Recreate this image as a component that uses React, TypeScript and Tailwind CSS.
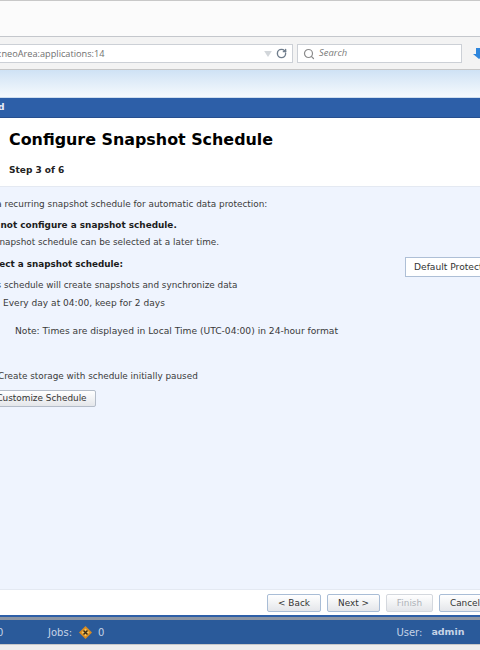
import { Search, RotateCw } from "lucide-react";

const body = { fontFamily: '"DejaVu Sans", Verdana, sans-serif' };

function WizardButton({ label, disabled, className }: { label: string; disabled?: boolean; className: string }) {
  return (
    <button
      className={`h-[18px] shrink-0 rounded-[2px] border text-[8.9px] leading-none bg-gradient-to-b from-white to-[#e4e6ea] ${
        disabled ? "border-[#d4d8de] text-[#aeb2b8]" : "border-[#a9bdd6] text-[#333333]"
      } ${className}`}
    >
      {label}
    </button>
  );
}

export default function App() {
  return (
    <div className="w-[480px] h-[650px] overflow-hidden bg-white flex flex-col" style={body}>
      {/* Browser tab strip */}
      <div className="h-[37px] shrink-0 bg-[#fbfbfb] border-t border-b border-t-[#c8c8c8] border-b-[#c4c7cc]" />

      {/* Browser toolbar */}
      <div className="h-[33px] shrink-0 bg-[#f3f3f3] border-b border-[#c6c6c6] flex items-center pt-[1px]">
        <div
          className="w-[293px] h-[19px] shrink-0 bg-white border border-l-0 border-[#ccd0d6] flex items-center justify-between pr-[5px] text-[9.2px] text-[#6f6f6f]"
          style={{ fontFamily: '"Open Sans", sans-serif' }}
        >
          <span className="-ml-[1px] whitespace-nowrap">:neoArea:applications:14</span>
          <span className="flex items-center gap-[4px]">
            <svg width="8" height="6" viewBox="0 0 9 7"><path d="M0 0h9L4.5 7z" fill="#d2d6da" /></svg>
            <RotateCw size={11} strokeWidth={3} className="text-[#6f7d8c]" />
          </span>
        </div>
        <div
          className="ml-[4px] w-[165px] h-[19px] shrink-0 bg-white border border-[#ccd0d6] flex items-center pl-[5px] gap-[4px] text-[9.4px] italic text-[#7a7a7a]"
          style={{ fontFamily: '"Open Sans", sans-serif' }}
        >
          <Search size={12} strokeWidth={2.4} className="text-[#8a8a8a]" />
          <span>Search</span>
        </div>
        <svg className="ml-[11px] shrink-0" width="10" height="13" viewBox="0 0 10 13">
          <path d="M3 1h7v5h0v3L6 12 0 7h3z" fill="#2f86dc" />
        </svg>
      </div>

      {/* Application header gradient */}
      <div className="h-[28px] shrink-0 bg-gradient-to-b from-[#cfe2f5] to-[#f6fafd] border-b border-[#cfdff0]" />

      {/* Wizard title bar */}
      <div className="h-[20px] shrink-0 bg-[#2d5fa8] border-b border-[#264f8f] flex items-center text-[9.15px] font-bold text-[#e8eef7]">
        <span className="-ml-[2px]">d</span>
      </div>

      {/* Heading */}
      <div className="h-[69px] shrink-0 bg-white border-b border-[#e4e9f2] pl-[9px] pt-[11px]">
        <h1 className="text-[15.9px] leading-[22px] font-bold text-black whitespace-nowrap">Configure Snapshot Schedule</h1>
        <p className="mt-[12px] text-[9px] leading-[14px] font-bold text-[#222222]">Step 3 of 6</p>
      </div>

      {/* Body */}
      <div className="flex-1 min-h-0 bg-[#eff4fe] text-[8.85px] leading-[14px] text-[#3a3a3a] whitespace-nowrap flex flex-col pt-[10px]">
        <p className="-ml-[34px] text-[8.9px]">Select a recurring snapshot schedule for automatic data protection:</p>
        <p className="-ml-[16px] mt-[7px] text-[8.9px] font-bold text-[#1c1c1c]">Do not configure a snapshot schedule.</p>
        <p className="-ml-[14px] mt-[3px]">A snapshot schedule can be selected at a later time.</p>
        <div className="mt-[8px] flex items-start justify-between">
          <p className="-ml-[16px] text-[8.8px] font-bold text-[#1c1c1c]">Select a snapshot schedule:</p>
          <div className="w-[75px] h-[20px] overflow-hidden shrink-0 bg-white border border-r-0 border-[#aebfd6] pl-[8px] text-[9.15px] leading-[18px] text-[#333333]">
            Default Protection Schedule
          </div>
        </div>
        <p className="-ml-[17px] mt-[1px]">This schedule will create snapshots and synchronize data</p>
        <p className="ml-[3px] mt-[4px] text-[9.05px]">Every day at 04:00, keep for 2 days</p>
        <p className="ml-[15px] mt-[14px] text-[9.15px]">Note: Times are displayed in Local Time (UTC-04:00) in 24-hour format</p>
        <p className="-ml-[2px] mt-[31px]">Create storage with schedule initially paused</p>
        <div className="mt-[7px]">
          <WizardButton label="Customize Schedule" className="-ml-[15px] w-[111px] !h-[17px] !border-[#b4bcc8] pl-[2px]" />
        </div>
      </div>

      {/* Button row */}
      <div className="h-[26px] shrink-0 bg-white border-t border-[#e4e9f2] flex items-start pt-[4px] pl-[267px] gap-[6px]">
        <WizardButton label="< Back" className="w-[54px]" />
        <WizardButton label="Next >" className="w-[53px]" />
        <WizardButton label="Finish" disabled className="w-[47px]" />
        <WizardButton label="Cancel" className="w-[52px] text-[#222222]" />
      </div>

      {/* Status bar */}
      <div className="h-[5px] shrink-0 bg-[#8c95a3] border-t-2 border-[#2d5fa8]" />
      <div className="h-[24px] shrink-0 bg-[#2a5a9a] flex items-center text-[10px] text-[#c6d3e6]">
        <span className="-ml-[3px] w-[51px]">0</span>
        <span>Jobs:</span>
        <svg className="ml-[7px] shrink-0" width="13" height="13" viewBox="0 0 13 13">
          <path d="M6.5 0L13 6.5 6.5 13 0 6.5z" fill="#d98a1f" />
          <path d="M6.5 2.5l4 4-4 4-4-4z" fill="#f3c15a" />
          <path d="M4.5 4.5l4 4M8.5 4.5l-4 4" stroke="#3a2a12" strokeWidth="1.5" />
        </svg>
        <span className="ml-[6px]">0</span>
        <span className="ml-[292px]">User:</span>
        <span className="ml-[9px] text-[9.5px] font-bold">admin</span>
      </div>
      <div className="h-[6px] shrink-0 bg-[#eeeeee] border-t border-[#c8c8c8]" />
    </div>
  );
}
